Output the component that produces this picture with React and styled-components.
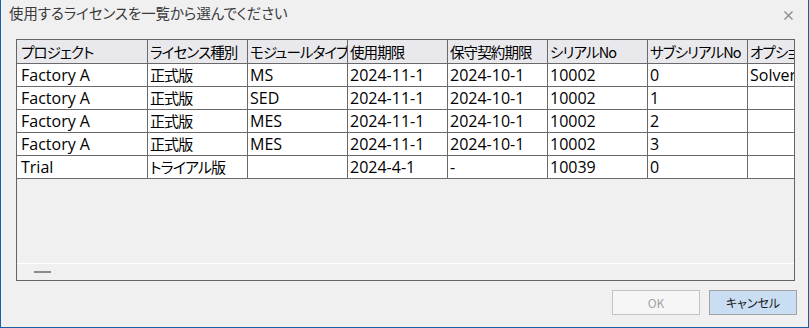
import React from "react";
import styled, { createGlobalStyle } from "styled-components";

const Global = createGlobalStyle`
  html, body { margin: 0; padding: 0; background: #f0f0f0; }
  * { box-sizing: border-box; }
`;

const FONT = `"Open Sans", "Noto Sans CJK JP", sans-serif`;
const JP = `"Noto Sans CJK JP", sans-serif`;

const Window = styled.div`
  width: 809px;
  height: 328px;
  background: #f0f0f1;
  border: 1px solid #1b5ea4;
  border-top: none;
  display: flex;
  flex-direction: column;
  font-family: ${FONT};
  color: #000;
`;

const TitleBar = styled.div`
  height: 39px;
  display: flex;
  align-items: flex-start;
  justify-content: space-between;
  padding: 3px 13px 0 8px;
`;

const Title = styled.div`
  font-family: ${JP};
  font-size: 14.4px;
  font-feature-settings: "palt";
  color: #3a3a3a;
  line-height: 20px;
`;

const Close = styled.div`
  width: 10px;
  height: 10px;
  margin-top: 7px;
  margin-right: 2px;
  display: flex;
  align-items: center;
  justify-content: center;
`;

const GridBox = styled.div`
  margin: 0 13px 0 15px;
  height: 242px;
  border: 1px solid #646464;
  display: flex;
  flex-direction: column;
  overflow: hidden;
  background: #f0f0f1;
`;

const TableArea = styled.div`
  flex: 1;
  overflow: hidden;
  min-height: 0;
`;

const Row = styled.div`
  display: flex;
  height: ${(p) => (p.$header ? 24 : 23)}px;
  border-bottom: 1px solid #6a6a6a;
  background: ${(p) => (p.$header ? "#e9e9ed" : "#ffffff")};
  width: 850px;
`;

const Cell = styled.div`
  flex: none;
  width: ${(p) => p.$w}px;
  border-right: 1px solid #6a6a6a;
  padding-left: ${(p) => (p.$first ? 4 : 2)}px;
  white-space: nowrap;
  overflow: hidden;
  font-family: ${(p) => (p.$jp || p.$header ? JP : FONT)};
  font-size: ${(p) => (p.$header ? 14.5 : p.$jp ? 15 : 16)}px;
  font-feature-settings: ${(p) => (p.$jp || p.$header ? `"palt"` : "normal")};
  letter-spacing: ${(p) => (p.$header ? "-0.9px" : p.$jp ? "-0.9px" : "0")};
  line-height: ${(p) => (p.$header ? 23 : 22)}px;
  color: #000;
`;

const ScrollStrip = styled.div`
  height: 17px;
  border-top: 1px solid #ffffff;
  display: flex;
  align-items: center;
  padding-left: 17px;
`;

const Thumb = styled.div`
  width: 17px;
  height: 2px;
  background: #8a8a8a;
`;

const ButtonRow = styled.div`
  display: flex;
  justify-content: flex-end;
  gap: 9px;
  margin-top: 9px;
  padding-right: 11px;
`;

const Button = styled.button`
  width: 88px;
  height: 25px;
  border: 1px solid ${(p) => (p.$primary ? "#a3a3a3" : "#c4c4c4")};
  background: ${(p) => (p.$primary ? "#c9ddf3" : "#f6f6f7")};
  color: ${(p) => (p.disabled ? "#a3a3a3" : "#1a1a1a")};
  font-family: ${JP};
  font-size: 12px;
  font-feature-settings: "palt";
  padding: 0;
  line-height: 23px;
`;

const COLS = [131, 100, 100, 100, 100, 100, 100, 100];
const HEAD = [
  "プロジェクト",
  "ライセンス種別",
  "モジュールタイプ",
  "使用期限",
  "保守契約期限",
  "シリアルNo",
  "サブシリアルNo",
  "オプション",
];

const ROWS = [
  ["Factory A", "正式版", "MS", "2024-11-1", "2024-10-1", "10002", "0", "Solver"],
  ["Factory A", "正式版", "SED", "2024-11-1", "2024-10-1", "10002", "1", ""],
  ["Factory A", "正式版", "MES", "2024-11-1", "2024-10-1", "10002", "2", ""],
  ["Factory A", "正式版", "MES", "2024-11-1", "2024-10-1", "10002", "3", ""],
  ["Trial", "トライアル版", "", "2024-4-1", "-", "10039", "0", ""],
];

const isJp = (s) => /[\u3040-\u30ff\u4e00-\u9fff]/.test(s);

export default function App() {
  return (
    <>
      <Global />
      <Window>
        <TitleBar>
          <Title>使用するライセンスを一覧から選んでください</Title>
          <Close>
            <svg width="9" height="9" viewBox="0 0 9 9">
              <path d="M0.5 0.5 L8.5 8.5 M8.5 0.5 L0.5 8.5" stroke="#8a8a8a" strokeWidth="1.3" />
            </svg>
          </Close>
        </TitleBar>
        <GridBox>
          <TableArea>
            <Row $header>
              {HEAD.map((h, i) => (
                <Cell key={i} $w={COLS[i]} $first={i === 0} $header>
                  {h}
                </Cell>
              ))}
            </Row>
            {ROWS.map((r, ri) => (
              <Row key={ri}>
                {r.map((c, i) => (
                  <Cell key={i} $w={COLS[i]} $first={i === 0} $jp={isJp(c)}>
                    {c}
                  </Cell>
                ))}
              </Row>
            ))}
          </TableArea>
          <ScrollStrip>
            <Thumb />
          </ScrollStrip>
        </GridBox>
        <ButtonRow>
          <Button disabled>OK</Button>
          <Button $primary>キャンセル</Button>
        </ButtonRow>
      </Window>
    </>
  );
}
